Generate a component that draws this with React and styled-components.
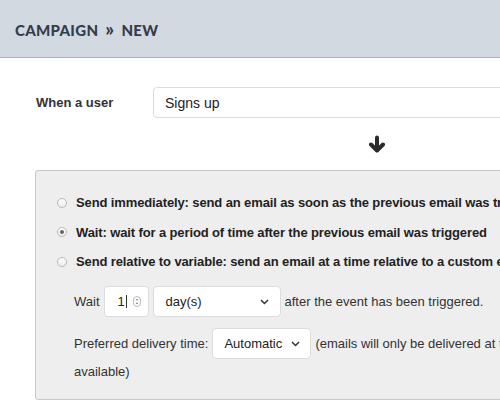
import React from 'react';
import styled, { createGlobalStyle } from 'styled-components';

const Global = createGlobalStyle`
  html, body {
    margin: 0;
    padding: 0;
    background: #fff;
    overflow: hidden;
  }
  body {
    font-family: "Liberation Sans", Arial, sans-serif;
    font-size: 13px;
    color: #333;
  }
`;

const Page = styled.div`
  width: 500px;
  height: 408px;
  overflow: hidden;
`;

const Header = styled.div`
  height: 58px;
  background: #d3d9e1;
  border-bottom: 1px solid #a9b1ba;
  display: flex;
  align-items: center;
  padding: 2px 0 0 15px;
  box-sizing: border-box;
`;

const Title = styled.h1`
  margin: 0;
  font-family: Lato, "Liberation Sans", sans-serif;
  font-weight: 900;
  font-size: 15px;
  letter-spacing: 0.3px;
  color: #343d4b;
  display: flex;
  align-items: center;
  gap: 7px;
`;

const Sep = styled.span`
  font-size: 19px;
  line-height: 15px;
  margin-top: -3px;
`;

const Body = styled.div`
  padding: 29px 0 0 35px;
  width: 620px;
`;

const UserRow = styled.div`
  display: flex;
  align-items: center;
`;

const Label = styled.label`
  width: 117px;
  padding-left: 1px;
  font-weight: bold;
  font-size: 13px;
  color: #333;
`;

const TextInput = styled.div`
  flex: 1;
  height: 31px;
  box-sizing: border-box;
  border: 1px solid #dcdcdc;
  border-radius: 4px;
  display: flex;
  align-items: center;
  padding-left: 11px;
  font-size: 14px;
  color: #222;
`;

const ArrowRow = styled.div`
  height: 52px;
  display: flex;
  align-items: center;
  padding-left: 333px;
  padding-bottom: 1px;
  box-sizing: border-box;
`;

const Panel = styled.div`
  background: #eeeeee;
  border: 1px solid #c8c8c8;
  border-radius: 3px;
  height: 230px;
  box-sizing: border-box;
  padding: 17px 0 0 21px;
`;

const RadioRow = styled.div`
  display: flex;
  align-items: center;
  height: 29.5px;
  gap: 9px;
  font-weight: bold;
  font-size: 13px;
  letter-spacing: -0.12px;
  color: #222;
  white-space: nowrap;
`;

const Radio = styled.span`
  width: 10px;
  height: 10px;
  border-radius: 50%;
  box-sizing: border-box;
  border: 1px solid #b9b9b9;
  background: linear-gradient(#fdfdfd, #ececec);
  display: flex;
  align-items: center;
  justify-content: center;
  &::after {
    content: '';
    width: 4px;
    height: 4px;
    border-radius: 50%;
    background: ${({ checked }) => (checked ? '#666' : 'transparent')};
  }
`;

const Options = styled.div`
  padding: 4px 0 0 17px;
`;

const OptRow = styled.div`
  display: flex;
  align-items: center;
  gap: 4px;
  height: ${({ h }) => h || 42}px;
  font-size: 13px;
  color: #333;
  white-space: nowrap;
`;

const Box = styled.div`
  height: 31px;
  width: ${({ w }) => w}px;
  box-sizing: border-box;
  background: #fff;
  border: 1px solid #dcdcdc;
  border-radius: 4px;
  display: flex;
  align-items: center;
  justify-content: space-between;
  padding: 0 ${({ pr }) => pr || 10}px 0 ${({ pl }) => pl || 11}px;
  font-size: 13px;
  color: #222;
`;

const NumberValue = styled.span`
  display: flex;
  align-items: center;
  gap: 1px;
`;

const Caret = styled.span`
  width: 1px;
  height: 13px;
  background: #333;
`;

const Spinner = () => (
  <svg width="8" height="11" viewBox="0 0 8 11">
    <rect x="0.5" y="0.5" width="7" height="10" rx="3.5" fill="#fff" stroke="#bbb" />
    <path d="M2.5 4.2L4 2.7l1.5 1.5zM2.5 6.8L4 8.3l1.5-1.5z" fill="#777" />
  </svg>
);

const Chevron = () => (
  <svg width="9" height="6" viewBox="0 0 9 6">
    <path d="M1 1l3.5 3.5L8 1" fill="none" stroke="#333" strokeWidth="1.5" />
  </svg>
);

const ArrowDown = () => (
  <svg width="18" height="18" viewBox="0 0 18 18">
    <g fill="none" stroke="#2b2b2b" strokeWidth="4" strokeLinecap="round" strokeLinejoin="round">
      <path d="M9 2.5v12" />
      <path d="M3 9.5l6 6 6-6" />
    </g>
  </svg>
);

export default function App() {
  return (
    <Page>
      <Global />
      <Header>
        <Title>
          <span>CAMPAIGN</span>
          <Sep>»</Sep>
          <span>NEW</span>
        </Title>
      </Header>
      <Body>
        <UserRow>
          <Label>When a user</Label>
          <TextInput>Signs up</TextInput>
        </UserRow>
        <ArrowRow>
          <ArrowDown />
        </ArrowRow>
        <Panel>
          <RadioRow>
            <Radio />
            Send immediately: send an email as soon as the previous email was triggered
          </RadioRow>
          <RadioRow>
            <Radio checked />
            Wait: wait for a period of time after the previous email was triggered
          </RadioRow>
          <RadioRow>
            <Radio />
            Send relative to variable: send an email at a time relative to a custom event
          </RadioRow>
          <Options>
            <OptRow>
              <span>Wait</span>
              <Box w={45} pl={13} pr={7}>
                <NumberValue>
                  1<Caret />
                </NumberValue>
                <Spinner />
              </Box>
              <Box w={128} pl={12} pr={11}>
                <span>day(s)</span>
                <Chevron />
              </Box>
              <span>after the event has been triggered.</span>
            </OptRow>
            <OptRow>
              <span>Preferred delivery time:</span>
              <Box w={99} pl={11} pr={10}>
                <span>Automatic</span>
                <Chevron />
              </Box>
              <span>(emails will only be delivered at the times available)</span>
            </OptRow>
            <OptRow h={14}>
              <span>available)</span>
            </OptRow>
          </Options>
        </Panel>
      </Body>
    </Page>
  );
}
